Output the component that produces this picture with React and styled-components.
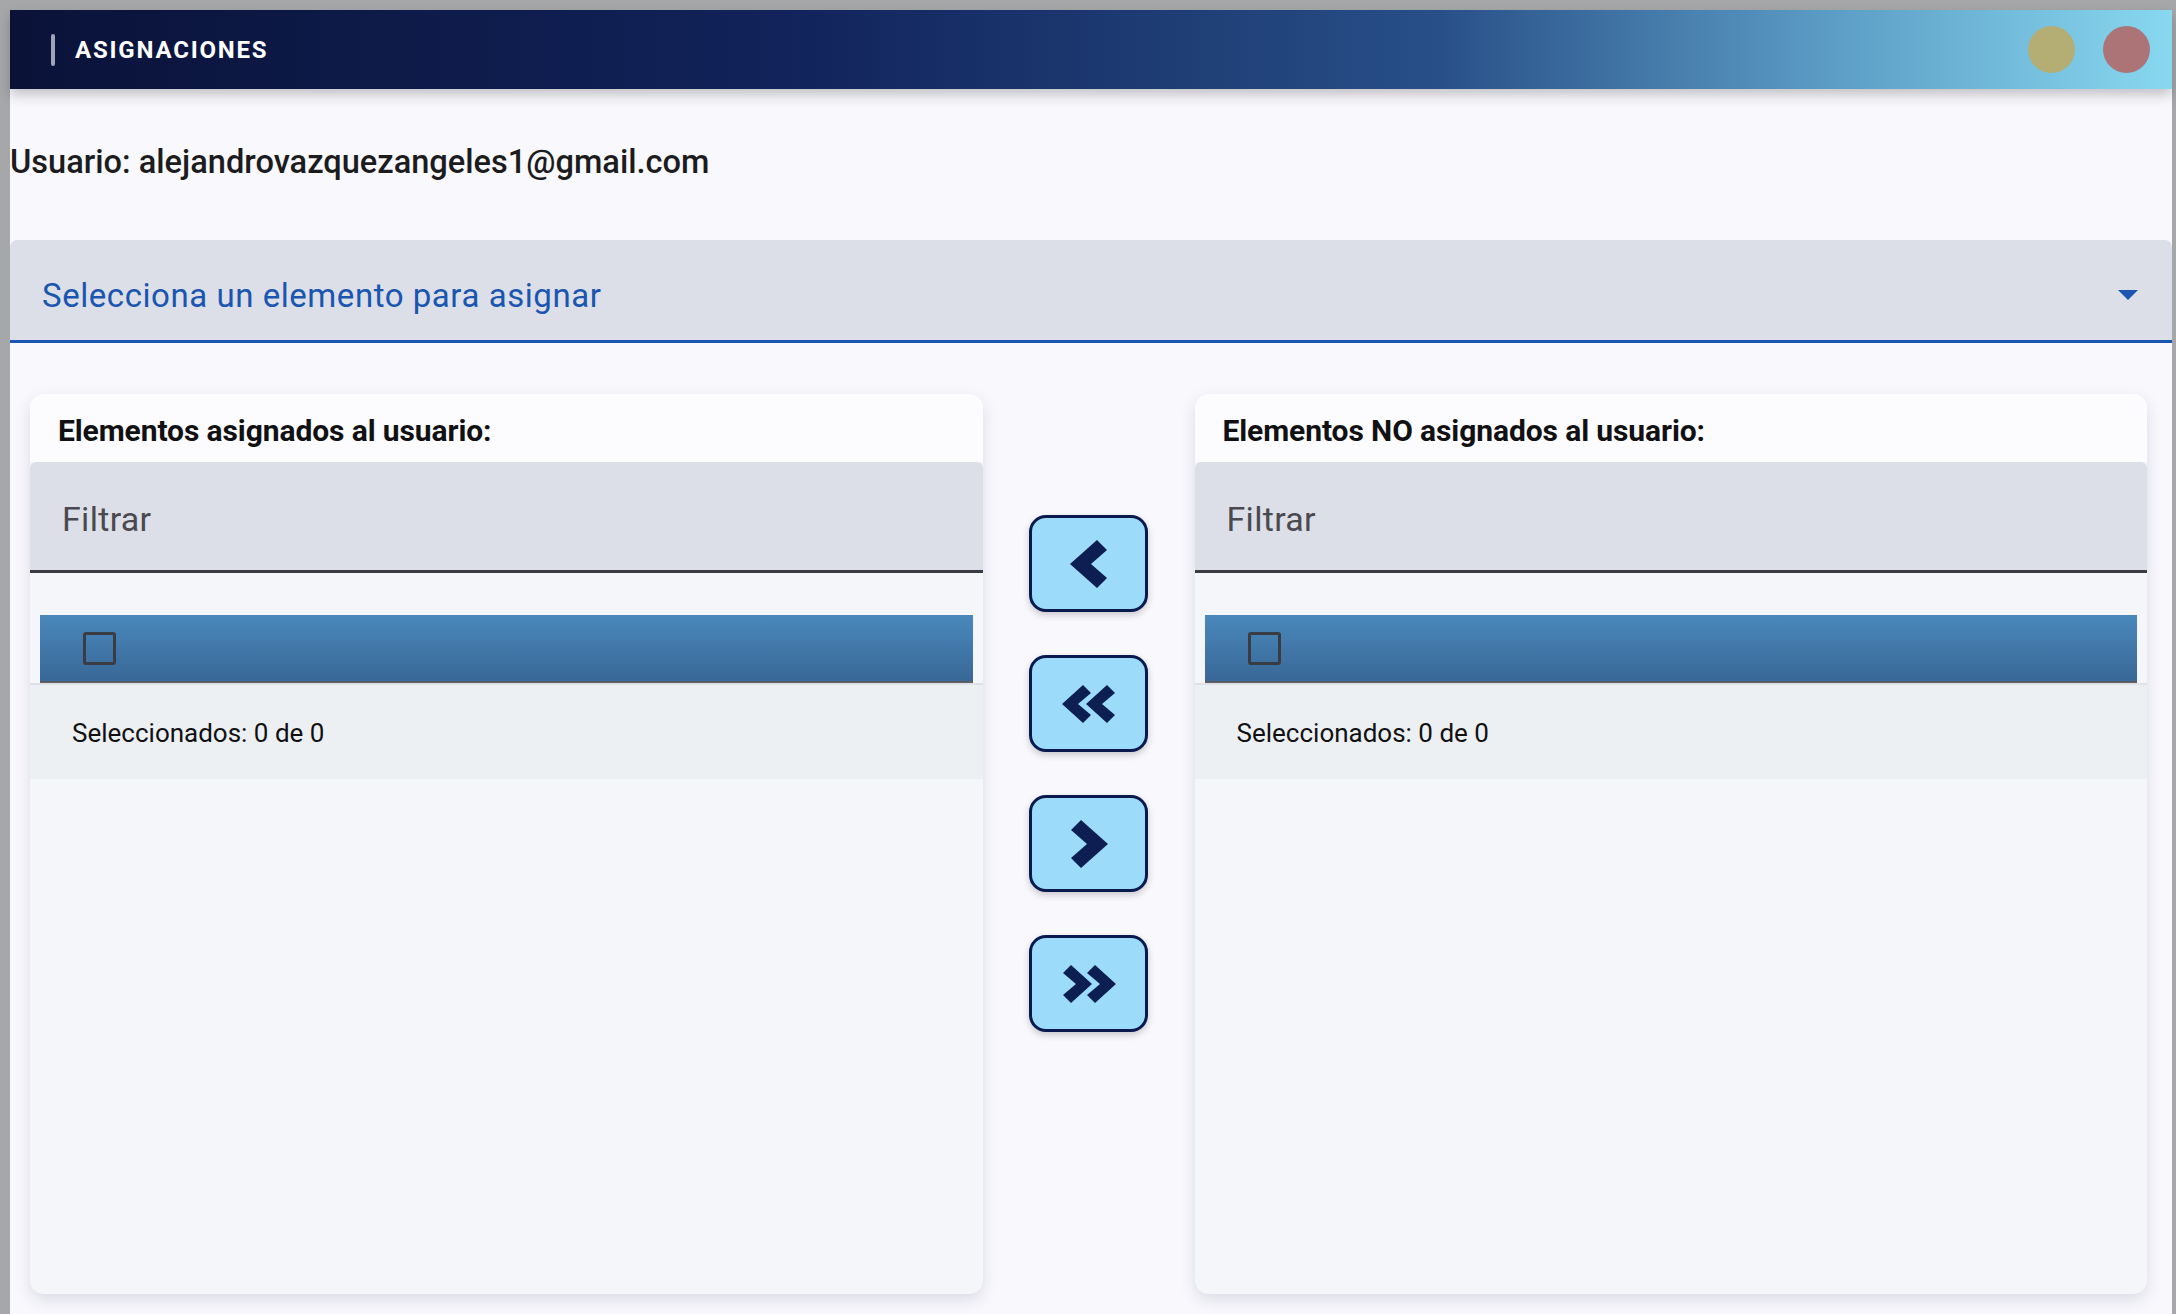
import styled, { createGlobalStyle } from "styled-components";

const GlobalStyle = createGlobalStyle`
  html, body {
    margin: 0;
    padding: 0;
    background-color: #a6a7a9;
    font-family: Roboto, "Liberation Sans", sans-serif;
    overflow: hidden;
  }
`;

const Backdrop = styled.div`
  height: 100vh;
  box-sizing: border-box;
  padding: 10px 4px 0 10px;
`;

const Dialog = styled.div`
  height: 100%;
  background-color: #f8f8fd;
  display: flex;
  flex-direction: column;
`;

const Header = styled.div`
  height: 79px;
  flex-shrink: 0;
  display: flex;
  align-items: center;
  padding: 0 22px 0 41px;
  background: linear-gradient(
    90deg,
    #0a1238 0%,
    #11235a 36%,
    #284f88 66%,
    #5b9cc4 84%,
    #88d8f0 100%
  );
  box-shadow: 0 6px 12px rgba(0, 0, 0, 0.22);
  position: relative;
  z-index: 1;
`;

const HeaderBar = styled.span`
  width: 4px;
  height: 32px;
  border-radius: 2px;
  background-color: #9ea3b9;
  margin-right: 20px;
`;

const HeaderTitle = styled.h1`
  margin: 0;
  flex: 1;
  color: #ffffff;
  font-size: 24px;
  font-weight: 700;
  letter-spacing: 1.8px;
`;

const Dot = styled.span`
  width: 47px;
  height: 47px;
  border-radius: 50%;
  background-color: ${(p) => p.$color};
  margin-left: 28px;
`;

const UserLine = styled.p`
  margin: 54px 0 0;
  font-size: 32.6px;
  line-height: 38px;
  font-weight: 500;
  color: #1c1c1f;
`;

const SelectField = styled.div`
  margin-top: 59px;
  height: 103px;
  flex-shrink: 0;
  box-sizing: border-box;
  display: flex;
  align-items: center;
  justify-content: space-between;
  padding: 10px 34px 0 32px;
  background-color: #dcdfe7;
  border-bottom: 3px solid #1a56b0;
  border-radius: 7px 7px 0 0;
`;

const SelectText = styled.span`
  color: #1a56b0;
  font-size: 33px;
  letter-spacing: 0.55px;
`;

const Caret = styled.span`
  width: 0;
  height: 0;
  border-left: 10px solid transparent;
  border-right: 10px solid transparent;
  border-top: 10px solid #1a56b0;
`;

const Columns = styled.div`
  flex: 1;
  display: grid;
  grid-template-columns: 1fr 212px 1fr;
  margin-top: 51px;
  padding: 0 25px 20px 20px;
  min-height: 0;
`;

const Panel = styled.div`
  background-color: #f5f6fa;
  border-radius: 14px;
  box-shadow: 0 6px 16px rgba(30, 30, 60, 0.13);
  display: flex;
  flex-direction: column;
  overflow: hidden;
`;

const PanelTitle = styled.h2`
  margin: 0;
  height: 68px;
  box-sizing: border-box;
  display: flex;
  align-items: center;
  padding: 4px 0 0 28px;
  background-color: #fcfcfe;
  font-size: 30px;
  font-weight: 700;
  letter-spacing: -0.1px;
  color: #111114;
`;

const FilterField = styled.div`
  height: 111px;
  box-sizing: border-box;
  display: flex;
  align-items: center;
  padding: 6px 0 0 32px;
  background-color: #dcdfe7;
  border-bottom: 3px solid #3b3b42;
  border-radius: 6px 6px 0 0;
  font-size: 34px;
  letter-spacing: 0.3px;
  color: #49494f;
`;

const TableHead = styled.div`
  margin: 42px 10px 0;
  height: 66px;
  display: flex;
  align-items: center;
  padding-left: 43px;
  background: linear-gradient(180deg, #4a88bb 0%, #386797 100%);
  border-bottom: 2px solid #5d5f66;
`;

const Checkbox = styled.span`
  width: 27px;
  height: 27px;
  border: 3px solid #3a3c44;
  border-radius: 3px;
`;

const Footer = styled.div`
  height: 96px;
  box-sizing: border-box;
  display: flex;
  align-items: center;
  padding: 2px 0 0 42px;
  background-color: #edf0f3;
  border-top: 2px solid #dfe1e5;
  font-size: 26px;
  color: #111114;
`;

const ButtonColumn = styled.div`
  display: flex;
  flex-direction: column;
  align-items: center;
  padding-top: 121px;
  gap: 43px;
`;

const MoveButton = styled.button`
  width: 119px;
  height: 97px;
  display: flex;
  align-items: center;
  justify-content: center;
  padding: 0;
  background-color: #9cdcfa;
  border: 3px solid #0a1a4f;
  border-radius: 17px;
  box-shadow: 0 3px 7px rgba(0, 0, 0, 0.2);
  cursor: pointer;
`;

const Chevron = ({ flip }) => (
  <svg width="40" height="50" viewBox="0 0 40 50">
    <polygon
      points="1,25 28,1 38,11 22,25 38,39 28,49"
      fill="#0d1f52"
      transform={flip ? "translate(40 0) scale(-1 1)" : undefined}
    />
  </svg>
);

const DoubleChevron = ({ flip }) => (
  <svg width="56" height="40" viewBox="0 0 56 40">
    <g fill="#0d1f52" transform={flip ? "translate(56 0) scale(-1 1)" : undefined}>
      <polygon points="1,20 22,1 30,9 17,20 30,31 22,39" />
      <polygon points="25,20 46,1 54,9 41,20 54,31 46,39" />
    </g>
  </svg>
);

function ListPanel({ title }) {
  return (
    <Panel>
      <PanelTitle>{title}</PanelTitle>
      <FilterField>Filtrar</FilterField>
      <TableHead>
        <Checkbox />
      </TableHead>
      <Footer>Seleccionados: 0 de 0</Footer>
    </Panel>
  );
}

export default function App() {
  return (
    <>
      <GlobalStyle />
      <Backdrop>
        <Dialog>
          <Header>
            <HeaderBar />
            <HeaderTitle>ASIGNACIONES</HeaderTitle>
            <Dot $color="#b4ad74" />
            <Dot $color="#ad7478" />
          </Header>

          <UserLine>Usuario: alejandrovazquezangeles1@gmail.com</UserLine>

          <SelectField>
            <SelectText>Selecciona un elemento para asignar</SelectText>
            <Caret />
          </SelectField>

          <Columns>
            <ListPanel title="Elementos asignados al usuario:" />
            <ButtonColumn>
              <MoveButton>
                <Chevron />
              </MoveButton>
              <MoveButton>
                <DoubleChevron />
              </MoveButton>
              <MoveButton>
                <Chevron flip />
              </MoveButton>
              <MoveButton>
                <DoubleChevron flip />
              </MoveButton>
            </ButtonColumn>
            <ListPanel title="Elementos NO asignados al usuario:" />
          </Columns>
        </Dialog>
      </Backdrop>
    </>
  );
}
